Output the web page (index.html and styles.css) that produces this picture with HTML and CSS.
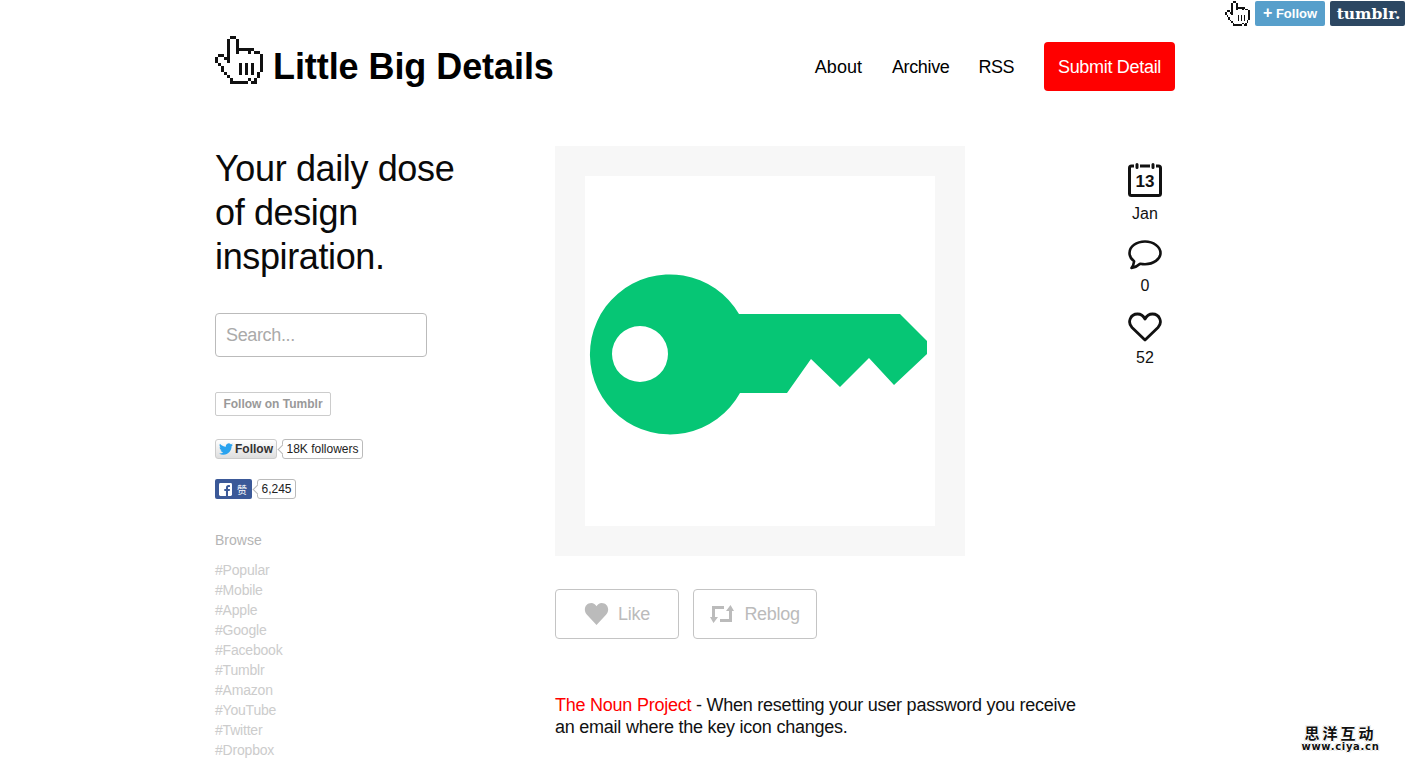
FILE: index.html
```html
<!DOCTYPE html>
<html lang="en">
<head>
<meta charset="utf-8">
<title>Little Big Details</title>
<link rel="stylesheet" href="styles.css">
</head>
<body>
<svg class="defs" width="0" height="0" aria-hidden="true">
  <symbol id="hand" viewBox="0 0 16 16">
    <path fill="#fff" d="M5 0h2v4h6v2h3v6h-1v2h-1v2H5v-2H4v-1H3v-1H2v-2H1V9H0V7h1V6h2v1h1V1h1z"/>
    <path fill="#111" d="M5 0h2v1H5zM4 1h1v8H4zM7 1h1v5H7zM8 4h5v1H8zM11 5h1v1h-1zM13 5h2v1h-2zM15 6h1v6h-1zM1 6h2v1H1zM0 7h1v2H0zM3 7h1v1H3zM1 9h1v1H1zM2 10h1v2H2zM3 12h1v1H3zM4 13h1v1H4zM5 14h1v1H5zM5 15h6v1H5zM12 15h2v1h-2zM11 14h1v1h-1zM14 12h1v2h-1zM13 14h1v1h-1zM8 9h1v4H8zM10 9h1v4h-1zM12 9h1v4h-1z"/>
  </symbol>
</svg>

<div class="tumblr-controls">
  <svg class="hand-small" shape-rendering="crispEdges"><use href="#hand"/></svg>
  <a class="tc-follow"><span class="tc-plus">+</span> Follow</a>
  <a class="tc-logo">tumblr.</a>
</div>

<div class="page">
  <header class="header">
    <div class="brand">
      <svg class="hand-big" shape-rendering="crispEdges"><use href="#hand"/></svg>
      <h1 class="title">Little Big Details</h1>
    </div>
    <nav class="nav">
      <a class="nav-link nav-about">About</a>
      <a class="nav-link nav-archive">Archive</a>
      <a class="nav-link nav-rss">RSS</a>
      <a class="submit">Submit Detail</a>
    </nav>
  </header>

  <div class="content">
    <aside class="sidebar">
      <h2 class="tagline">Your daily dose of design inspiration.</h2>
      <div class="search">Search...</div>
      <a class="tumblr-follow">Follow on Tumblr</a>
      <div class="social tw">
        <a class="tw-btn">
          <svg class="bird" viewBox="0 0 24 24"><path fill="#2aa3ef" d="M23.95 4.57a10 10 0 0 1-2.82.77 4.96 4.96 0 0 0 2.16-2.72c-.95.55-2 .96-3.12 1.19a4.92 4.92 0 0 0-8.38 4.48C7.69 8.1 4.07 6.13 1.64 3.16a4.82 4.82 0 0 0-.67 2.48c0 1.71.87 3.21 2.19 4.1a4.9 4.9 0 0 1-2.23-.61v.06a4.92 4.92 0 0 0 3.95 4.83 5 5 0 0 1-2.21.08 4.94 4.94 0 0 0 4.6 3.42A9.87 9.87 0 0 1 0 19.54a14 14 0 0 0 7.56 2.21c9.05 0 14-7.5 14-13.98 0-.21 0-.42-.02-.63a9.94 9.94 0 0 0 2.46-2.55z"/></svg>
          Follow
        </a>
        <span class="count tw-count">18K followers</span>
      </div>
      <div class="social fb">
        <a class="fb-btn">
          <svg class="fb-icon" viewBox="0 0 14 14"><rect width="14" height="14" rx="1.5" fill="#fff"/><path fill="#3b5998" d="M9.700 14V8.600h1.800l.3-2.100H9.700V5.200c0-.6.2-1 1-1h1.100V2.300c-.2 0-.9-.1-1.600-.1-1.600 0-2.700 1-2.700 2.800v1.500H5.700v2.100h1.800V14z"/></svg>
          <span class="fb-label">赞</span>
        </a>
        <span class="count fb-count">6,245</span>
      </div>
      <h3 class="browse">Browse</h3>
      <ul class="tags">
        <li>#Popular</li>
        <li>#Mobile</li>
        <li>#Apple</li>
        <li>#Google</li>
        <li>#Facebook</li>
        <li>#Tumblr</li>
        <li>#Amazon</li>
        <li>#YouTube</li>
        <li>#Twitter</li>
        <li>#Dropbox</li>
      </ul>
    </aside>

    <main class="post">
      <div class="photo">
        <svg class="key" viewBox="0 0 350 350" width="350" height="350">
          <path fill="#06c675" fill-rule="evenodd" d="M154 138H315L342 165V178L309 209 284 182 255 211 226 183 202 217H155A80 80 0 1 1 154 138ZM55 150A28 28 0 1 0 55 206 28 28 0 1 0 55 150Z"/>
        </svg>
      </div>
      <div class="actions">
        <a class="action">
          <svg class="like-icon" viewBox="0 0 34 30"><path fill="#bbb" d="M17 30 4 16C-2 9 2 0 10 0c3 0 5.500 1.700 7 4.500C18.500 1.700 21 0 24 0c8 0 12 9 6 16z"/></svg>
          Like
        </a>
        <a class="action action-reblog">
          <svg class="reblog-icon" viewBox="0 0 24 20"><path fill="#bbb" d="M2 2h12v3H5v8h3l-4.500 6L0 13h2zM22 18H10v-3h9V7h-3l4.500-6L24 7h-2z"/></svg>
          Reblog
        </a>
      </div>
      <p class="caption"><a class="source">The Noun Project</a> - When resetting your user password you receive an email where the key icon changes.</p>
    </main>

    <aside class="meta">
      <div class="meta-item">
        <svg class="cal" viewBox="0 0 34 34" width="34" height="34">
          <path fill="none" stroke="#111" stroke-width="3" d="M6 3H3.500Q1.500 3 1.500 5V30.500Q1.500 32.500 3.500 32.500H30.500Q32.500 32.500 32.500 30.500V5Q32.500 3 30.500 3H28M12 3h10"/>
          <path stroke="#111" stroke-width="3" stroke-linecap="round" d="M9 1.500v3M25 1.500v3"/>
          <text class="cal-num" x="17" y="24" text-anchor="middle">13</text>
        </svg>
        <span class="meta-label">Jan</span>
      </div>
      <div class="meta-item">
        <svg viewBox="0 0 34 30" width="34" height="30">
          <path fill="none" stroke="#111" stroke-width="2.600" stroke-linejoin="round" d="M17 1.500C8.500 1.500 1.500 6.500 1.500 13c0 3.300 1.800 6.200 4.600 8.300-.3 2.500-1.300 5-2.600 6.700 3.200-.6 6.400-2.200 8.600-4.300 1.600.3 3.200.5 4.900.5 8.500 0 15.500-5 15.500-11.200S25.500 1.500 17 1.500z"/>
        </svg>
        <span class="meta-label">0</span>
      </div>
      <div class="meta-item">
        <svg viewBox="0 0 34 30" width="34" height="30">
          <path fill="none" stroke="#111" stroke-width="2.800" stroke-linejoin="round" d="M17 28 4 15.500C-1 10 2.500 2 9.500 2c3.300 0 6 2 7.500 5 1.500-3 4.200-5 7.500-5 7 0 10.500 8 5.500 13.500z"/>
        </svg>
        <span class="meta-label">52</span>
      </div>
    </aside>
  </div>
</div>

<div class="watermark">
  <div class="wm-cn">思洋互动</div>
  <div class="wm-en">www.ciya.cn</div>
</div>
</body>
</html>
```
FILE: styles.css
```css
* { box-sizing: border-box; }
html, body { margin: 0; padding: 0; height: 762px; overflow: hidden; background: #fff; }
body { font-family: "Liberation Sans", Arial, sans-serif; color: #000; position: relative; }
.defs { position: absolute; }

.tumblr-controls { position: absolute; top: 1px; right: 4px; display: flex; align-items: flex-start; gap: 5px; }
.hand-small { width: 25px; height: 25px; }
.tc-follow { width: 70px; height: 25px; background: #579fcb; border-radius: 2px; color: #fff; font-size: 13px; font-weight: bold; line-height: 24px; text-align: center; white-space: nowrap; }
.tc-plus { font-size: 16px; }
.tc-logo { width: 75px; height: 25px; background: #2c4762; border-radius: 2px; color: #fff; font-family: "DejaVu Serif", "Liberation Serif", serif; font-weight: bold; font-size: 15.5px; line-height: 25px; text-align: center; padding-left: 2px; white-space: nowrap; }

.page { width: 960px; margin-left: 215px; }

.header { display: flex; justify-content: space-between; align-items: center; height: 146px; padding-bottom: 14px; }
.brand { display: flex; align-items: center; gap: 10px; }
.hand-big { width: 48px; height: 48px; margin-top: -12px; }
.title { margin: 2px 0 0; font-size: 36px; line-height: 44px; font-weight: bold; letter-spacing: -0.07px; white-space: nowrap; }
.nav { display: flex; align-items: center; }
.nav-link { font-size: 18px; line-height: 24px; padding-top: 2px; margin-right: 30px; }
.nav-about { letter-spacing: 0; }
.nav-archive { letter-spacing: -0.35px; margin-right: 29px; }
.nav-rss { letter-spacing: -0.5px; }
.submit { display: block; width: 131px; height: 49px; background: #f00; color: #fff; border-radius: 4px; font-size: 18px; line-height: 51px; text-align: center; letter-spacing: -0.3px; }

.content { display: flex; align-items: flex-start; }
.sidebar { width: 340px; flex: none; }
.tagline { margin: 1px 0 0; width: 260px; font-size: 36px; line-height: 44px; font-weight: normal; letter-spacing: -0.37px; color: #0a0a0a; }
.search { margin-top: 34px; width: 212px; height: 44px; border: 1px solid #bbb; border-radius: 4px; padding-left: 10px; font-size: 18px; line-height: 42px; letter-spacing: -0.35px; color: #aaa; }
.tumblr-follow { display: block; margin-top: 35px; width: 116px; height: 24px; border: 1px solid #ccc; border-radius: 2px; font-size: 12px; line-height: 22px; font-weight: bold; color: #999; text-align: center; white-space: nowrap; }

.social { display: flex; align-items: center; height: 20px; }
.tw { margin-top: 23px; }
.fb { margin-top: 20px; }
.count { position: relative; display: block; height: 20px; border: 1px solid #bbb; border-radius: 3px; font-size: 12px; line-height: 18px; text-align: center; color: #222; background: #fff; }
.count::before { content: ""; position: absolute; left: -4px; top: 6px; width: 6px; height: 6px; background: #fff; border-left: 1px solid #bbb; border-bottom: 1px solid #bbb; transform: rotate(45deg); }
.tw-btn { display: flex; align-items: center; width: 62px; height: 20px; border: 1px solid #ccc; border-radius: 3px; background: linear-gradient(#fff, #dedede); font-size: 12px; font-weight: bold; color: #333; padding-left: 3px; gap: 2px; }
.bird { width: 14px; height: 14px; }
.tw-count { margin-left: 5px; width: 81px; }
.fb-btn { display: flex; align-items: center; width: 37px; height: 20px; background: #3b5998; border-radius: 2px; padding-left: 4px; gap: 5px; }
.fb-icon { width: 13px; height: 13px; }
.fb-label { color: #fff; font-size: 10px; font-family: "Noto Sans CJK SC", sans-serif; }
.fb-count { margin-left: 5px; width: 39px; }

.browse { margin: 32px 0 0; font-size: 14px; line-height: 18px; font-weight: normal; color: #b5b5b5; }
.tags { list-style: none; margin: 11px 0 0; padding: 0; font-size: 14px; line-height: 20px; letter-spacing: -0.2px; color: #ccc; }

.post { width: 520px; flex: none; }
.photo { width: 410px; height: 410px; background: #f7f7f7; padding: 30px; }
.key { display: block; background: #fff; }
.actions { display: flex; gap: 14px; margin-top: 33px; }
.action { display: flex; align-items: center; justify-content: center; gap: 9px; width: 124px; height: 50px; border: 1px solid #c4c4c4; border-radius: 4px; color: #bbb; font-size: 18px; letter-spacing: -0.3px; }
.action-reblog { gap: 10px; }
.like-icon { width: 25px; height: 22px; }
.reblog-icon { width: 24px; height: 20px; }
.caption { margin: 55px 0 0; width: 530px; font-size: 18px; line-height: 22px; letter-spacing: -0.24px; color: #111; }
.source { color: #f00; }

.meta { width: 60px; margin-left: 40px; display: flex; flex-direction: column; align-items: center; padding-top: 17px; }
.meta-item { display: flex; flex-direction: column; align-items: center; margin-bottom: 16px; }
.meta-label { font-size: 16px; line-height: 20px; margin-top: 6px; color: #111; }
.meta-item svg { display: block; }
.meta-item .cal { margin-bottom: 1px; }
.cal-num { font-size: 17px; font-weight: bold; fill: #111; font-family: "Liberation Sans", sans-serif; }

.watermark { position: absolute; left: 1300px; top: 725px; width: 81px; text-align: center; color: #111; font-weight: bold; text-shadow: 1px 0 #fff, -1px 0 #fff, 0 1px #fff, 0 -1px #fff, 1px 1px #ddd, -1px -1px #ddd, 1px -1px #ddd, -1px 1px #ddd; }
.wm-cn { font-family: "Noto Sans CJK SC", sans-serif; font-size: 15px; line-height: 16px; letter-spacing: 3px; white-space: nowrap; }
.wm-en { font-family: "DejaVu Sans", sans-serif; font-size: 10px; line-height: 11px; letter-spacing: 0.7px; white-space: nowrap; }
```
